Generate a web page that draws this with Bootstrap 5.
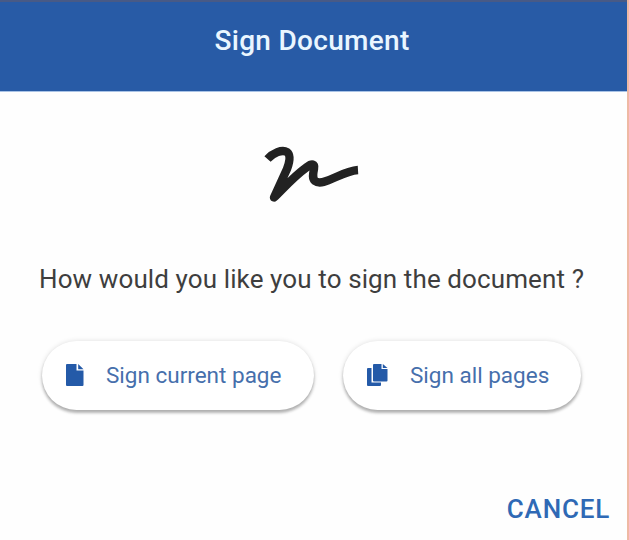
<!DOCTYPE html>
<html lang="en">
<head>
<meta charset="utf-8">
<meta name="viewport" content="width=device-width, initial-scale=1">
<title>Sign Document</title>
<link href="https://cdn.jsdelivr.net/npm/bootstrap@5.3.0/dist/css/bootstrap.min.css" rel="stylesheet">
<style>
  body { font-family: Roboto, "Liberation Sans", sans-serif; background: #fefefe; }
  .sign-dialog { height: 540px; border-right: 2px solid #efb9a4; overflow: hidden; }
  .sign-header { height: 92px; padding-top: 24px; background: #285ba6; border-top: 2px solid #485a86; border-bottom: 1px solid #a9c3e6; }
  .sign-title { font-size: 28px; line-height: 30px; font-weight: 500; letter-spacing: .3px; color: #eaf6ff; padding-right: 3px; }
  .signature { height: 163px; padding: 47px 8px 0 0; }
  .question { font-size: 26px; line-height: 48px; letter-spacing: .11px; color: #3e3e3e; padding-left: 39px; white-space: nowrap; }
  .choices { gap: 29px; padding: 38px 0 0 42px; }
  .choice { --bs-btn-color: #466fac; --bs-btn-hover-color: #285ba6; --bs-btn-bg: #fff; height: 69px; padding: 0 0 2px; font-size: 22.5px; line-height: 30px; white-space: nowrap;
    box-shadow: 0 3px 3px rgba(0,0,0,.27), 0 0 5px rgba(0,0,0,.13); }
  .choice-current { width: 272px; }
  .choice-all { width: 238px; }
  .choice svg { flex: none; margin-left: 23px; }
  .choice-label { margin-left: 22px; }
  .cancel { --bs-btn-color: #2f69b5; font-size: 26px; line-height: 30px; font-weight: 500; letter-spacing: .8px; padding: 0; margin: 0 16px 15px 0; }
</style>
</head>
<body>
<main class="sign-dialog d-flex flex-column">
  <header class="sign-header text-center flex-shrink-0">
    <h1 class="sign-title m-0">Sign Document</h1>
  </header>
  <div class="signature flex-shrink-0 d-flex justify-content-center">
    <svg width="120" height="70" viewBox="250 138 120 70" fill="none" stroke="#222" stroke-width="8.400" stroke-linejoin="round" aria-hidden="true">
      <path d="M267.500 158C273 152 282 148 287 151C291 154 290 160 287 168L274 196.500C281 190 293 176 307 166C312 162 315 163 314 168C313 173 312 177 315 180C323 186.500 341 170 358 169"/>
    </svg>
  </div>
  <p class="question m-0">How would you like you to sign the document ?</p>
  <div class="choices d-flex">
    <button type="button" class="btn choice choice-current rounded-pill d-flex align-items-center">
      <svg width="18" height="22" viewBox="0 0 18 22" aria-hidden="true"><path fill="#245aa8" d="M0 1Q0 0 1 0H10.500V6.500H17.500V21Q17.500 22 16.500 22H1Q0 22 0 21Z"/><path fill="#245aa8" d="M12.200 0L17.500 5.200H12.200Z"/></svg>
      <span class="choice-label">Sign current page</span>
    </button>
    <button type="button" class="btn choice choice-all rounded-pill d-flex align-items-center">
      <svg width="21" height="22" viewBox="0 0 21 22" aria-hidden="true"><path fill="#245aa8" d="M0 5Q0 4 1 4H4.500V18.500H14V21Q14 22 13 22H1Q0 22 0 21Z"/><path fill="#245aa8" d="M6 1Q6 0 7 0H14.500V5H20.500V16.500Q20.500 17.500 19.500 17.500H7Q6 17.500 6 16.500Z"/><path fill="#245aa8" d="M15.800 0L20.500 4H15.800Z"/></svg>
      <span class="choice-label">Sign all pages</span>
    </button>
  </div>
  <div class="mt-auto d-flex justify-content-end">
    <button type="button" class="btn cancel">CANCEL</button>
  </div>
</main>
<script src="https://cdn.jsdelivr.net/npm/bootstrap@5.3.0/dist/js/bootstrap.bundle.min.js"></script>
</body>
</html>
